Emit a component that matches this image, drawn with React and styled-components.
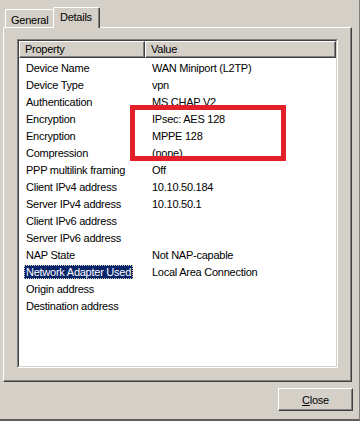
import React from 'react';
import styled, { createGlobalStyle } from 'styled-components';

const GlobalStyle = createGlobalStyle`
  html, body {
    margin: 0;
    padding: 0;
    background: #d4d0c8;
  }
  body {
    font-family: "Liberation Sans", Arial, sans-serif;
    font-size: 11px;
    letter-spacing: -0.25px;
    color: #000;
  }
  * {
    box-sizing: border-box;
  }
`;

const rows = [
  ['Device Name', 'WAN Miniport (L2TP)'],
  ['Device Type', 'vpn'],
  ['Authentication', 'MS CHAP V2'],
  ['Encryption', 'IPsec: AES 128'],
  ['Encryption', 'MPPE 128'],
  ['Compression', '(none)'],
  ['PPP multilink framing', 'Off'],
  ['Client IPv4 address', '10.10.50.184'],
  ['Server IPv4 address', '10.10.50.1'],
  ['Client IPv6 address', ''],
  ['Server IPv6 address', ''],
  ['NAP State', 'Not NAP-capable'],
  ['Network Adapter Used', 'Local Area Connection'],
  ['Origin address', ''],
  ['Destination address', ''],
];

const SELECTED = 12;

const App = () => {
  return (
    <>
      <GlobalStyle />
      <Window>
        <TabRow>
          <Tab>General</Tab>
          <Tab $active>Details</Tab>
        </TabRow>
        <Panel>
          <ListOuter>
            <ListInner>
              <Header>
                <HeaderCell>Property</HeaderCell>
                <HeaderCell>Value</HeaderCell>
              </Header>
              {rows.map(([prop, value], i) => (
                <Row key={i}>
                  <Cell>
                    <Label $selected={i === SELECTED}>{prop}</Label>
                  </Cell>
                  <Cell>
                    <Label>{value}</Label>
                  </Cell>
                </Row>
              ))}
            </ListInner>
          </ListOuter>
        </Panel>
        <Footer>
          <Button>
            <u>C</u>lose
          </Button>
        </Footer>
        <Highlight />
      </Window>
    </>
  );
};

export default App;

const Window = styled.div`
  position: relative;
  width: 360px;
  height: 421px;
  padding: 7px 0 0 3px;
  background: #d4d0c8;
  border-right: 1px solid #808080;
  border-bottom: 2px solid #5f5e5b;
  display: flex;
  flex-direction: column;
`;

const TabRow = styled.div`
  position: relative;
  z-index: 1;
  display: flex;
  align-items: flex-end;
  height: 20px;
  margin-left: 2px;
`;

const Tab = styled.div`
  width: ${(p) => (p.$active ? '47px' : '48px')};
  height: ${(p) => (p.$active ? '21px' : '18px')};
  margin-bottom: ${(p) => (p.$active ? '-1px' : '0')};
  padding: ${(p) => (p.$active ? '3px 0 0 6px' : '4px 0 0 5px')};
  background: #d4d0c8;
  border-top: 1px solid #fff;
  border-left: 1px solid #fff;
  border-right: ${(p) => (p.$active ? '1px solid #404040' : 'none')};
  border-radius: 2px 2px 0 0;
  box-shadow: ${(p) => (p.$active ? 'inset -1px 0 0 #808080' : 'none')};
  line-height: 13px;
  white-space: nowrap;
`;

const Panel = styled.div`
  width: 349px;
  height: 355px;
  padding: 11px 0 0 13px;
  border-top: 1px solid #fff;
  border-left: 1px solid #fff;
  border-right: 1px solid #404040;
  border-bottom: 1px solid #404040;
  box-shadow: inset -1px -1px 0 #808080;
`;

const ListOuter = styled.div`
  width: 321px;
  height: 329px;
  border-top: 1px solid #808080;
  border-left: 1px solid #808080;
  border-right: 1px solid #fff;
  border-bottom: 1px solid #fff;
`;

const ListInner = styled.div`
  height: 100%;
  background: #fff;
  overflow: hidden;
  border-top: 1px solid #404040;
  border-left: 1px solid #404040;
  border-right: 1px solid #d4d0c8;
  border-bottom: 1px solid #d4d0c8;
`;

const Header = styled.div`
  display: grid;
  grid-template-columns: 126px 1fr;
  height: 17px;
  margin-bottom: 1px;
`;

const HeaderCell = styled.div`
  padding: 0 0 0 5px;
  background: #d4d0c8;
  border-top: 1px solid #fff;
  border-left: 1px solid #fff;
  border-right: 1px solid #404040;
  border-bottom: 1px solid #404040;
  box-shadow: inset -1px -1px 0 #808080;
  line-height: 14px;
  white-space: nowrap;
`;

const Row = styled.div`
  display: grid;
  grid-template-columns: 126px 1fr;
  height: 17px;
  align-items: center;
`;

const Cell = styled.div`
  padding-left: 5px;
  white-space: nowrap;
`;

const Label = styled.span`
  display: inline-block;
  height: 14px;
  padding: 0 2px;
  line-height: 14px;
  background: ${(p) => (p.$selected ? '#0a246a' : 'transparent')};
  color: ${(p) => (p.$selected ? '#fff' : '#000')};
  outline: ${(p) => (p.$selected ? '1px dotted #d4d0c8' : 'none')};
  outline-offset: -1px;
`;

const Footer = styled.div`
  display: flex;
  justify-content: flex-end;
  padding: 6px 6px 0 0;
`;

const Button = styled.button`
  width: 75px;
  height: 23px;
  padding: 0;
  background: #d4d0c8;
  font-family: "Liberation Sans", Arial, sans-serif;
  font-size: 11px;
  letter-spacing: -0.25px;
  color: #000;
  border-top: 1px solid #fff;
  border-left: 1px solid #fff;
  border-right: 1px solid #404040;
  border-bottom: 1px solid #404040;
  border-radius: 0;
  box-shadow: inset -1px -1px 0 #808080;
`;

const Highlight = styled.div`
  position: absolute;
  left: 130px;
  top: 105px;
  width: 156px;
  height: 56px;
  border: 5px solid #e3202a;
  pointer-events: none;
`;
